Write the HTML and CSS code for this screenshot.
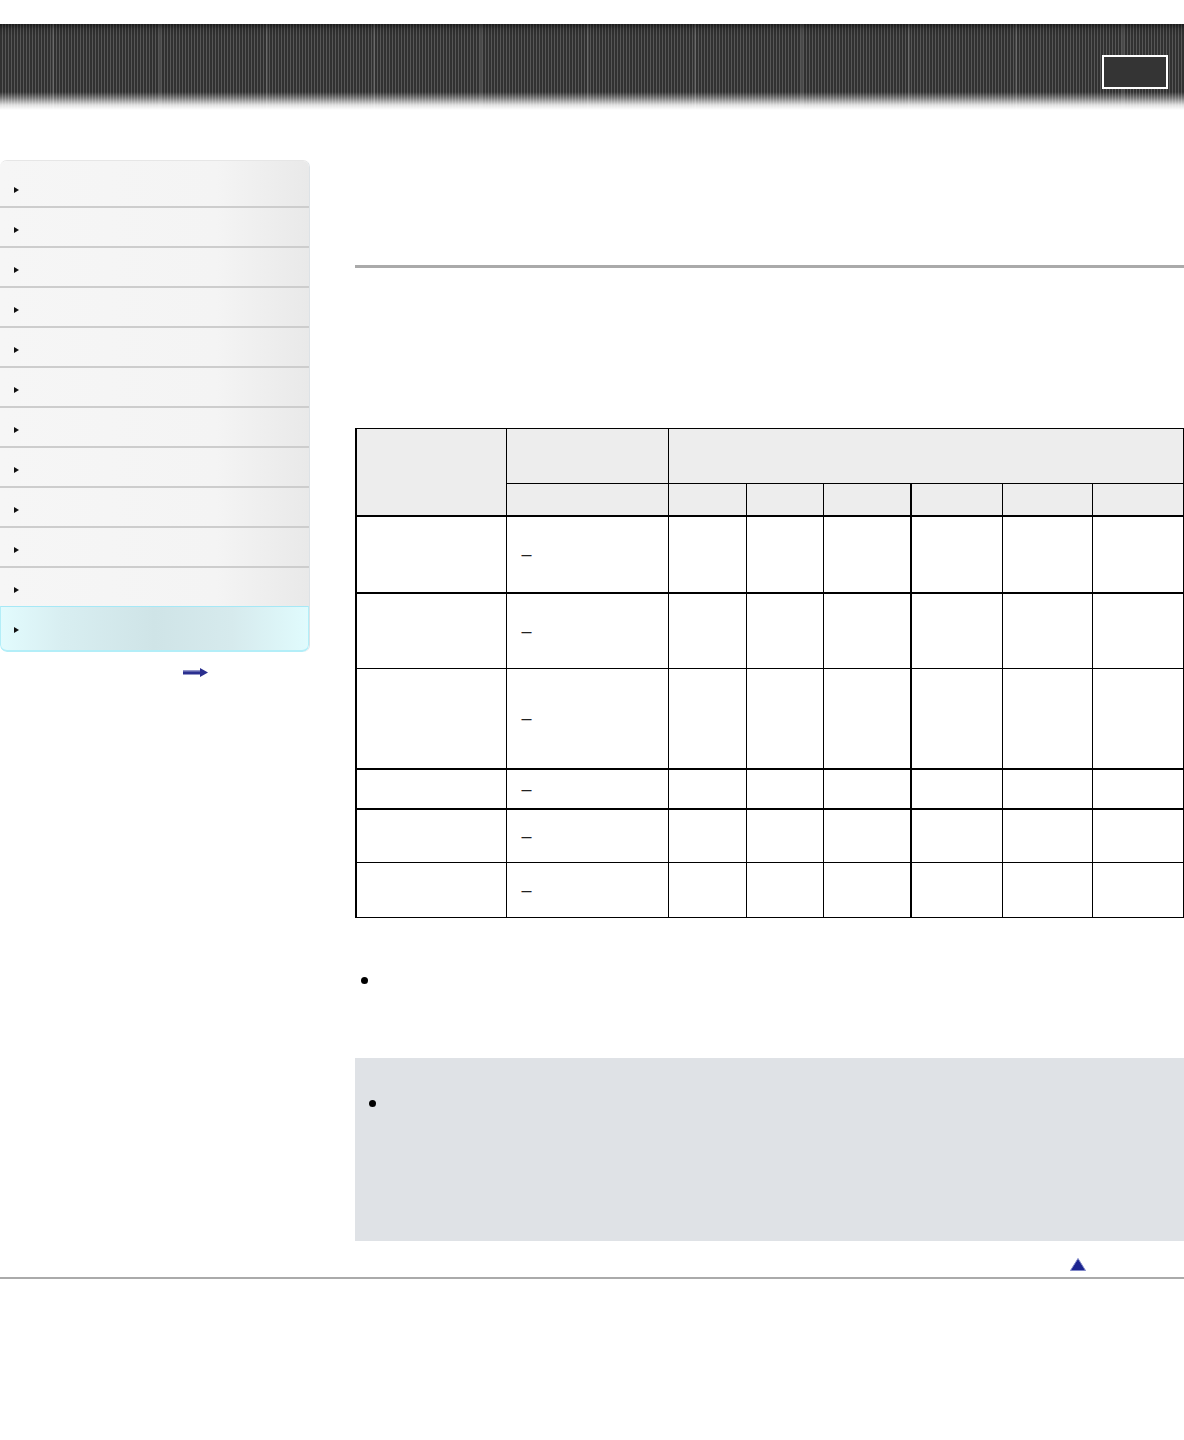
FILE: index.html
```html
<!DOCTYPE html>
<html lang="en">
<head>
<meta charset="utf-8">
<title>Help Guide</title>
<link rel="stylesheet" href="styles.css">
</head>
<body>
<header class="top">
  <div class="band">
    <div class="band-btn"></div>
  </div>
</header>
<div class="layout">
  <nav class="side">
    <ul class="menu">
      <li class="item first"><span class="tri"></span></li>
      <li class="item"><span class="tri"></span></li>
      <li class="item"><span class="tri"></span></li>
      <li class="item"><span class="tri"></span></li>
      <li class="item"><span class="tri"></span></li>
      <li class="item"><span class="tri"></span></li>
      <li class="item"><span class="tri"></span></li>
      <li class="item"><span class="tri"></span></li>
      <li class="item"><span class="tri"></span></li>
      <li class="item"><span class="tri"></span></li>
      <li class="item"><span class="tri"></span></li>
      <li class="item active"><span class="tri"></span></li>
    </ul>
    <div class="more">
      <svg class="more-arrow" width="25" height="9" viewBox="0 0 25 9"><path d="M0 2.5h17V0l8 4.5-8 4.5V6.5H0z" fill="#2a2f8f"/><path d="M0 3h17" stroke="#8a8fc8" stroke-width="1"/></svg>
    </div>
  </nav>
  <main class="main">
    <div class="title"></div>
    <div class="rule"></div>
    <div class="intro"></div>
    <table class="grid">
      <colgroup>
        <col class="c1"><col class="c2"><col class="c3"><col class="c4"><col class="c5"><col class="c6"><col class="c7"><col class="c8">
      </colgroup>
      <thead>
        <tr class="h1">
          <th rowspan="2"></th>
          <th></th>
          <th colspan="6"></th>
        </tr>
        <tr class="h2">
          <th></th>
          <th></th><th></th><th></th><th class="thick"></th><th></th><th></th>
        </tr>
      </thead>
      <tbody>
        <tr class="r1 heavy"><td></td><td class="dash">–</td><td></td><td></td><td></td><td class="thick"></td><td></td><td></td></tr>
        <tr class="r2"><td></td><td class="dash">–</td><td></td><td></td><td></td><td class="thick"></td><td></td><td></td></tr>
        <tr class="r3 heavy"><td></td><td class="dash">–</td><td></td><td></td><td></td><td class="thick"></td><td></td><td></td></tr>
        <tr class="r4 heavy"><td></td><td class="dash">–</td><td></td><td></td><td></td><td class="thick"></td><td></td><td></td></tr>
        <tr class="r5"><td></td><td class="dash">–</td><td></td><td></td><td></td><td class="thick"></td><td></td><td></td></tr>
        <tr class="r6"><td></td><td class="dash">–</td><td></td><td></td><td></td><td class="thick"></td><td></td><td></td></tr>
      </tbody>
    </table>
    <ul class="bullets">
      <li></li>
    </ul>
    <div class="note">
      <ul class="bullets inner">
        <li></li>
      </ul>
    </div>
    <div class="totop">
      <svg width="16" height="13" viewBox="0 0 16 13"><path d="M8 0.5L15.5 12.5H0.5z" fill="#1c2490" stroke="#8088c8" stroke-width="1"/><path d="M8 2.5L14 12H2z" fill="#1c2490"/></svg>
    </div>
  </main>
</div>
<div class="foot"></div>
</body>
</html>
```

FILE: styles.css
```css
html, body {
  margin: 0;
  padding: 0;
  background: #fff;
  font-family: "Liberation Sans", Arial, sans-serif;
  font-size: 12px;
  color: #000;
}

.top {
  padding-top: 24px;
}

.band {
  height: 86px;
  display: flex;
  justify-content: flex-end;
  align-items: flex-start;
  padding-right: 16px;
  box-sizing: border-box;
  background:
    linear-gradient(to bottom, rgba(0,0,0,0.45) 0, rgba(0,0,0,0.1) 5px, rgba(0,0,0,0) 12px, rgba(0,0,0,0) 68px, rgba(255,255,255,0.35) 74px, rgba(255,255,255,0.85) 81px, #fff 86px),
    repeating-linear-gradient(90deg, transparent 0 52px, rgba(255,255,255,0.12) 52px 54px, transparent 54px 107px),
    repeating-linear-gradient(90deg, #313131 0 2px, #575757 2px 3px);
}

.band-btn {
  margin-top: 31px;
  width: 66px;
  height: 34px;
  box-sizing: border-box;
  border: 2px solid #fff;
  background: #343434;
}

.layout {
  display: flex;
  align-items: flex-start;
  padding-top: 50px;
}

.side {
  width: 310px;
  flex: none;
}

.menu {
  list-style: none;
  margin: 0;
  padding: 0;
  border-radius: 7px;
  border-right: 1px solid #dde2e6;
  border-top: 1px solid #e6e6e6;
  overflow: hidden;
}

.item {
  border-bottom: 2px solid #cdcdcd;
  background: linear-gradient(to right, #f6f6f6 0, #f4f4f4 70%, #e9e9e9 100%);
  display: flex;
  align-items: center;
  padding-left: 14px;
  padding-top: 6px;
  box-sizing: content-box;
  height: 32px;
}

.item.first {
  padding-top: 13px;
}

.item.active {
  border-top: 1px solid #a6e8f6;
  margin-top: -2px;
  border-bottom: 2px solid #b3eef8;
  border-left: 1px solid #b3eef8;
  border-right: 1px solid #b3eef8;
  border-radius: 0 0 7px 7px;
  padding-left: 13px;
  padding-top: 2px;
  height: 41px;
  background: linear-gradient(to right, #e2fbfd 0, #d8eef1 20%, #cfe4e7 50%, #d6eaed 75%, #e0fbfd 100%);
}

.tri {
  width: 0;
  height: 0;
  border-top: 3px solid transparent;
  border-bottom: 3px solid transparent;
  border-left: 5px solid #111;
}

.more {
  display: flex;
  justify-content: flex-start;
  padding-left: 183px;
  padding-top: 16px;
}

.more-arrow {
  display: block;
}

.main {
  margin-left: 45px;
  width: 829px;
  flex: none;
}

.title {
  height: 105px;
}

.rule {
  height: 3px;
  background: #aaaaaa;
}

.intro {
  height: 160px;
}

.grid {
  width: 828px;
  table-layout: fixed;
  border-collapse: collapse;
  border-top: 1px solid #000;
  border-left: 2px solid #000;
  border-right: 2px solid #000;
  border-bottom: 1px solid #000;
}

.c1 { width: 150px; }
.c2 { width: 162px; }
.c3 { width: 78px; }
.c4 { width: 77px; }
.c5 { width: 88px; }
.c6 { width: 91px; }
.c7 { width: 90px; }
.c8 { width: 92px; }

.grid th,
.grid td {
  border: 1px solid #000;
  padding: 0;
}

.grid th {
  background: #ededed;
}

.grid .thick {
  border-left: 2px solid #000;
}

.grid thead tr.h2 th,
.grid thead th[rowspan] {
  border-bottom: 2px solid #000;
}

.h1 { height: 55px; }
.h2 { height: 32px; }
.r1 { height: 77px; }
.r2 { height: 76px; }
.r3 { height: 100px; }
.r4 { height: 40px; }
.r5 { height: 54px; }
.r6 { height: 55px; }

.grid tr.heavy td {
  border-bottom: 2px solid #000;
}

.grid td.dash {
  padding-left: 15px;
  font-size: 18px;
  line-height: 1;
  color: #222;
  vertical-align: middle;
}

.bullets {
  list-style: none;
  margin: 0;
  padding: 59px 0 0 6px;
  height: 140px;
  box-sizing: border-box;
}

.bullets li {
  display: block;
  width: 7px;
  height: 7px;
  border-radius: 50%;
  background: #000;
}

.note {
  background: #dfe2e6;
  height: 183px;
}

.bullets.inner {
  padding: 42px 0 0 14px;
  height: auto;
}

.totop {
  height: 36px;
  display: flex;
  justify-content: flex-end;
  align-items: flex-start;
  padding-top: 17px;
  padding-right: 98px;
  box-sizing: border-box;
}

.totop svg {
  display: block;
}

.foot {
  height: 2px;
  background: #aaaaaa;
}
```
